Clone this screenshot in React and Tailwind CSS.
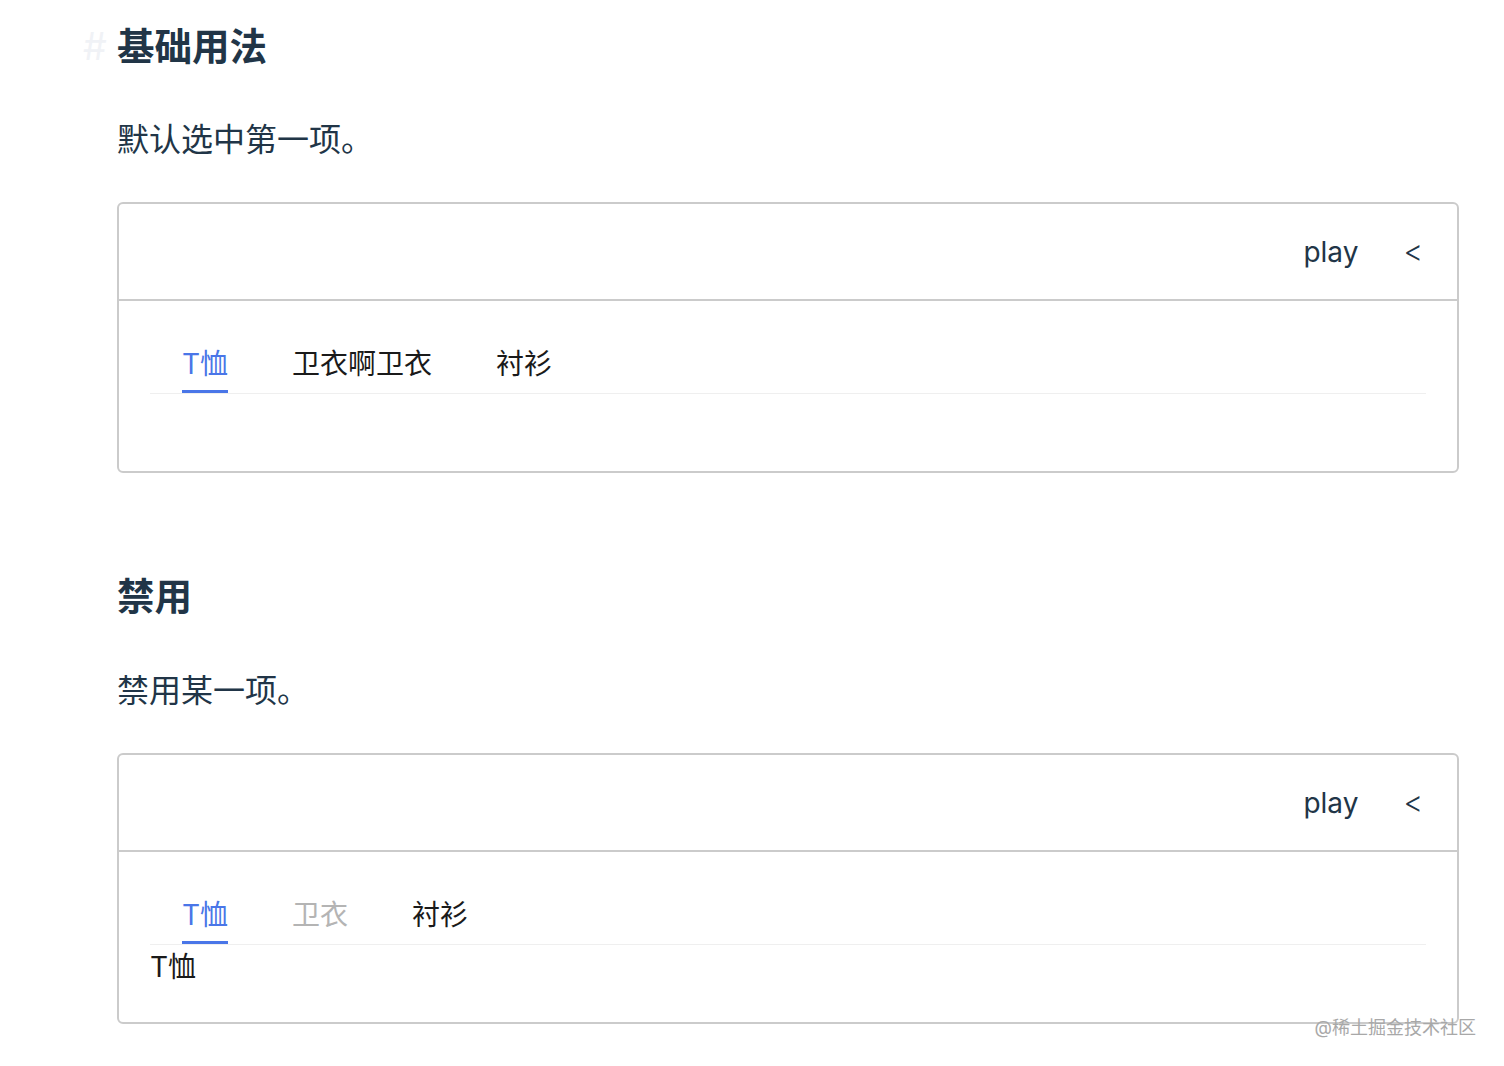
import React, { useState } from 'react';

const font = { fontFamily: 'Inter, "Noto Sans CJK SC", sans-serif' };

const Tabs = ({ items, showPanel }) => {
    const [active, setActive] = useState(0);

    return (
        <div>
            <div className="flex border-b border-[#efefef]">
                {items.map((item, i) => (
                    <button
                        key={item.label}
                        disabled={item.disabled}
                        onClick={() => setActive(i)}
                        className="px-8 flex flex-col items-center"
                    >
                        <span
                            className={
                                'text-[28px] leading-[40px] ' +
                                (i === active
                                    ? 'text-[#4a76e8]'
                                    : item.disabled
                                    ? 'text-[#b4b4b4]'
                                    : 'text-[#1a1a1a]')
                            }
                        >
                            {item.label}
                        </span>
                        <span
                            className={
                                'mt-[6px] h-[3px] w-full ' + (i === active ? 'bg-[#4a76e8]' : 'bg-transparent')
                            }
                        />
                    </button>
                ))}
            </div>
            <div className="min-h-[42px] pt-[2px] text-[28px] leading-[40px] text-[#1a1a1a]">
                {showPanel ? items[active].label : null}
            </div>
        </div>
    );
};

const Demo = ({ items, showPanel }) => (
    <div className="border-2 border-[#cbcbcb] rounded-[6px] bg-white">
        <div className="h-[97px] flex items-center justify-end pr-[34px] gap-[45px] border-b-2 border-[#cbcbcb]">
            <span className="text-[28px] text-[#213547]">play</span>
            <span className="text-[30px] font-light text-[#213547]">&lt;</span>
        </div>
        <div className="h-[170px] px-[31px] pt-[43px]">
            <Tabs items={items} showPanel={showPanel} />
        </div>
    </div>
);

const Heading = ({ children }) => (
    <h2 className="relative text-[37.5px] leading-[48px] font-bold text-[#213547]">
        <span className="absolute -left-[34px] top-0 text-[#f0f2f6] font-normal">#</span>
        {children}
    </h2>
);

export default function App() {
    return (
        <div className="relative w-[1504px] h-[1066px] bg-white overflow-hidden" style={font}>
            <div className="pl-[117px] pr-[45px] pt-[23px]">
                <Heading>基础用法</Heading>
                <p className="mt-[47px] text-[32px] leading-[44px] text-[#213547]">默认选中第一项。</p>
                <div className="mt-[40px]">
                    <Demo
                        items={[{ label: 'T恤' }, { label: '卫衣啊卫衣' }, { label: '衬衫' }]}
                        showPanel={false}
                    />
                </div>

                <div className="mt-[100px]">
                    <h2 className="text-[37.5px] leading-[48px] font-bold text-[#213547]">禁用</h2>
                </div>
                <p className="mt-[48px] text-[32px] leading-[44px] text-[#213547]">禁用某一项。</p>
                <div className="mt-[40px]">
                    <Demo
                        items={[{ label: 'T恤' }, { label: '卫衣', disabled: true }, { label: '衬衫' }]}
                        showPanel
                    />
                </div>
            </div>
            <div className="absolute right-[28px] top-[1016px] text-[18px] leading-[24px] text-[#a8a8a8]">
                @稀土掘金技术社区
            </div>
        </div>
    );
}
